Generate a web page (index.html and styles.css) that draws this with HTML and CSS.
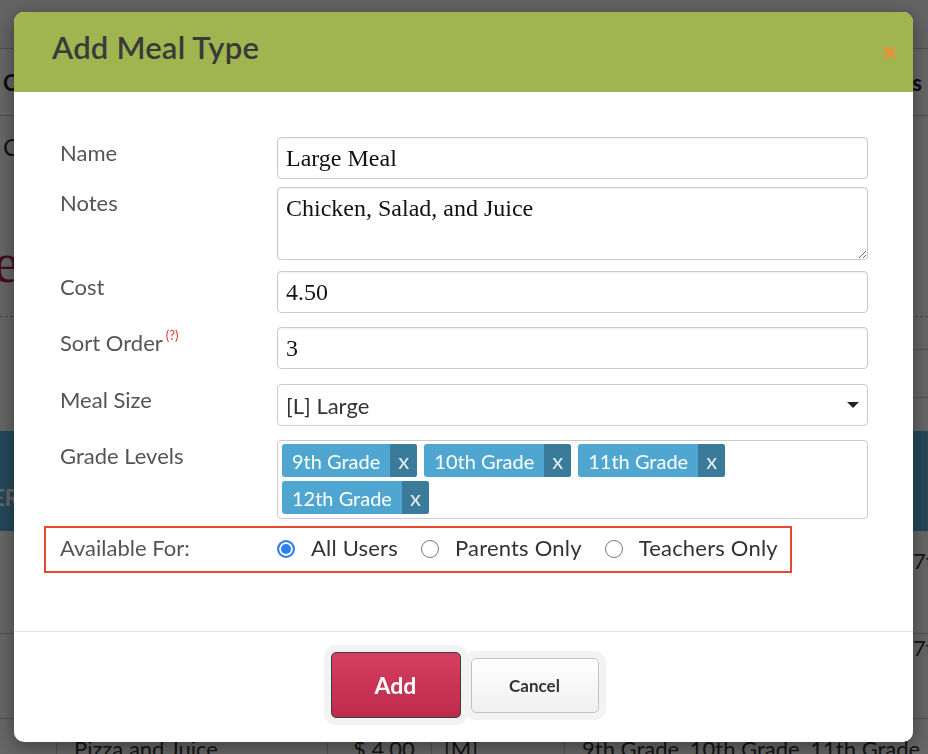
FILE: index.html
```html
<!DOCTYPE html>
<html lang="en">
<head>
    <meta charset="UTF-8">
    <meta name="viewport" content="width=device-width, initial-scale=1.0">
    <title>Meal Types</title>
    <link rel="stylesheet" href="styles.css">
</head>
<body>
<div class="page">
    <div class="topbar"></div>
    <div class="tabs">
        <span>Cafe</span>
        <span>Meal Types</span>
    </div>
    <div class="crumbs">Co</div>
    <div class="brand"><span>Large</span></div>
    <div class="subrows">
        <div class="subrow"></div>
        <div class="subrow"></div>
    </div>
    <div class="band"><span>ER</span></div>
    <div class="trow tall"><span class="tcell-last">7th Grade</span></div>
    <div class="trow"><span class="tcell-last">7th Grade</span></div>
    <div class="trow last">
        <span class="tc c1"></span>
        <span class="tc c2">Pizza and Juice</span>
        <span class="tc c3">$ 4.00</span>
        <span class="tc c4">[M]</span>
        <span class="tc c5">9th Grade, 10th Grade, 11th Grade,</span>
    </div>
</div>

<div class="backdrop">
    <div class="modal">
        <div class="modal-head">
            <h2>Add Meal Type</h2>
            <button class="close" type="button" aria-label="Close">
                <svg width="13" height="13" viewBox="0 0 13 13">
                    <path d="M2 2 L11 11 M11 2 L2 11" stroke="#e8913a" stroke-width="3.4" stroke-linecap="round"/>
                </svg>
            </button>
        </div>

        <form class="modal-body">
            <div class="row gap-8">
                <label>Name</label>
                <input class="field" type="text" value="Large Meal">
            </div>
            <div class="row gap-11">
                <label>Notes</label>
                <textarea class="field notes">Chicken, Salad, and Juice</textarea>
            </div>
            <div class="row">
                <label>Cost</label>
                <input class="field" type="text" value="4.50">
            </div>
            <div class="row gap-15">
                <label>Sort Order<sup class="help">(?)</sup></label>
                <input class="field" type="text" value="3">
            </div>
            <div class="row">
                <label>Meal Size</label>
                <div class="select-wrap">
                    <select class="field select">
                        <option>[L] Large</option>
                        <option>[M] Medium</option>
                        <option>[S] Small</option>
                    </select>
                </div>
            </div>
            <div class="row gap-7">
                <label>Grade Levels</label>
                <div class="field tags">
                    <span class="tag">9th Grade<span class="tag-x">x</span></span>
                    <span class="tag">10th Grade<span class="tag-x">x</span></span>
                    <span class="tag">11th Grade<span class="tag-x">x</span></span>
                    <span class="tag">12th Grade<span class="tag-x">x</span></span>
                </div>
            </div>
            <div class="avail">
                <span class="avail-label">Available For:</span>
                <label class="radio"><input type="radio" name="for" checked>All Users</label>
                <label class="radio"><input type="radio" name="for">Parents Only</label>
                <label class="radio"><input type="radio" name="for">Teachers Only</label>
            </div>
        </form>

        <div class="modal-foot">
            <button class="btn btn-add" type="button">Add</button>
            <button class="btn btn-cancel" type="button">Cancel</button>
        </div>
    </div>
</div>
</body>
</html>
```

FILE: styles.css
```css
body {
    margin: 0;
    font-family: 'Lato', 'Open Sans', sans-serif;
    background: #fff;
    color: #333;
    height: 754px;
    overflow: hidden;
}

/* page behind the dialog */
.page {
    width: 928px;
    overflow: hidden;
}
.page .topbar {
    height: 48px;
    background: #f6f6f6;
    border-bottom: 1px solid #c4c4c4;
}
.page .tabs {
    height: 66px;
    border-bottom: 1px solid #c4c4c4;
    display: flex;
    justify-content: space-between;
    align-items: center;
    padding: 0 6px 0 3px;
    font-size: 22px;
    font-weight: 700;
    color: #222;
}
.page .crumbs {
    height: 60px;
    padding: 16px 0 0 3px;
    box-sizing: border-box;
    font-size: 24px;
    color: #333;
}
.page .brand {
    height: 141px;
    border-bottom: 1px dashed #aaa;
    box-sizing: border-box;
    padding-top: 58px;
    font-family: 'Liberation Serif', serif;
    font-size: 58px;
    color: #b0204a;
    line-height: 1;
    white-space: nowrap;
}
.page .brand span {
    margin-left: -115px;
}
.page .subrows {
    padding-left: 600px;
}
.page .subrow {
    height: 47px;
    border-bottom: 1px solid #ccc;
}
.page .subrow:first-child {
    height: 32px;
}
.page .band {
    margin-top: 33px;
    height: 100px;
    background: #5ab5e0;
    color: #fff;
    font-weight: 700;
    font-size: 22px;
    padding-top: 53px;
    box-sizing: border-box;
}
.page .band span {
    margin-left: -8px;
}
.page .trow {
    height: 85px;
    border-bottom: 1px solid #ccc;
    box-sizing: border-box;
    font-size: 22px;
    display: flex;
}
.page .trow.tall {
    height: 103px;
    padding-top: 16px;
}
.page .trow .tcell-last {
    margin-left: 913px;
    white-space: nowrap;
}
.page .trow.last {
    border-bottom: none;
    padding-top: 10px;
}
.page .tc {
    display: block;
    border-right: 1px solid #ccc;
    white-space: nowrap;
    padding: 6px 0 0 17px;
    box-sizing: border-box;
    height: 60px;
}
.page .c1 { width: 57px; padding: 0; }
.page .c2 { width: 271px; }
.page .c3 { width: 104px; padding-left: 25px; }
.page .c4 { width: 133px; padding-left: 12px; }
.page .c5 { border-right: none; }

.backdrop {
    position: fixed;
    inset: 0;
    background: rgba(0, 0, 0, 0.6);
}

/* dialog */
.modal {
    position: absolute;
    top: 12px;
    left: 14px;
    width: 899px;
    height: 730px;
    background: #fff;
    border-radius: 10px;
    box-shadow: 0 5px 20px rgba(0, 0, 0, 0.4);
    overflow: hidden;
    display: flex;
    flex-direction: column;
}
.modal-head {
    height: 80px;
    background: #a0b54f;
    display: flex;
    justify-content: space-between;
    align-items: flex-start;
    padding: 0 17px 0 38px;
    box-sizing: border-box;
    flex-shrink: 0;
}
.modal-head h2 {
    margin: 17px 0 0;
    font-size: 31px;
    line-height: 36px;
    font-weight: 600;
    letter-spacing: 0.2px;
    color: #3a3a3a;
}
.modal-head .close {
    align-self: center;
    background: none;
    border: none;
    padding: 0;
    width: 13px;
    height: 13px;
    cursor: pointer;
    display: flex;
}

.modal-body {
    padding: 45px 45px 58px 46px;
    border-bottom: 1px solid #e4e4e4;
}
.row {
    display: flex;
    margin-bottom: 14px;
}
.row.gap-7 { margin-bottom: 7px; }
.row.gap-8 { margin-bottom: 8px; }
.row.gap-11 { margin-bottom: 11px; }
.row.gap-15 { margin-bottom: 15px; }
.row > label {
    width: 217px;
    flex-shrink: 0;
    padding-top: 4px;
    font-size: 22px;
    line-height: 24px;
    color: #555;
}
.row .help {
    color: #e8332a;
    font-size: 13px;
    margin-left: 3px;
    vertical-align: 11px;
    line-height: 0;
}

.field {
    flex: 1;
    min-width: 0;
    height: 42px;
    box-sizing: border-box;
    border: 1px solid #cacaca;
    border-radius: 4px;
    padding: 0 8px;
    font-family: 'Liberation Serif', serif;
    font-size: 24px;
    color: #111;
    background: #fff;
    box-shadow: inset 0 1px 2px rgba(0, 0, 0, 0.07);
    outline: none;
}
.field.notes {
    height: 73px;
    padding-top: 7px;
    resize: vertical;
    display: block;
}
.select-wrap {
    flex: 1;
    display: flex;
    position: relative;
}
.select-wrap::after {
    content: '';
    position: absolute;
    right: 9px;
    top: 18px;
    border-left: 6px solid transparent;
    border-right: 6px solid transparent;
    border-top: 6px solid #222;
    pointer-events: none;
}
.field.select {
    appearance: none;
    -webkit-appearance: none;
    font-family: 'Lato', 'Open Sans', sans-serif;
    font-size: 22px;
    color: #333;
    box-shadow: none;
}
.field.tags {
    height: 79px;
    padding: 3px 4px;
    display: flex;
    flex-wrap: wrap;
    align-content: flex-start;
    gap: 4px 7px;
    font-family: 'Lato', 'Open Sans', sans-serif;
    box-shadow: none;
}
.tag {
    display: inline-flex;
    align-items: center;
    height: 33px;
    background: #4fa7d1;
    color: #fff;
    font-size: 20px;
    padding-left: 10px;
    border-radius: 3px;
    overflow: hidden;
}
.tag .tag-x {
    display: flex;
    align-items: center;
    justify-content: center;
    align-self: stretch;
    width: 27px;
    margin-left: 10px;
    background: #3a7b9a;
    font-size: 22px;
    color: #e6eef3;
}

.avail {
    display: flex;
    align-items: center;
    width: 748px;
    height: 47px;
    box-sizing: border-box;
    margin-left: -16px;
    padding: 0 0 4px 14px;
    border: 2px solid #e8482d;
    white-space: nowrap;
}
.avail-label {
    width: 217px;
    flex-shrink: 0;
    font-size: 22px;
    color: #555;
}
.radio {
    display: flex;
    align-items: center;
    flex-shrink: 0;
    font-size: 22px;
    letter-spacing: 0.2px;
    color: #333;
    margin-right: 23px;
}
.radio input {
    appearance: none;
    -webkit-appearance: none;
    flex-shrink: 0;
    width: 18px;
    height: 18px;
    margin: 3px 16px 0 0;
    border: 1px solid #777;
    border-radius: 50%;
    background: #fff;
}
.radio input:checked {
    border: 2px solid #2f7ef2;
    background: #2f7ef2;
    box-shadow: inset 0 0 0 2px #fff;
}

.modal-foot {
    flex: 1;
    display: flex;
    justify-content: center;
    align-items: center;
    gap: 10px;
    padding: 0 0 4px 2px;
}
.btn {
    font-family: 'Lato', 'Open Sans', sans-serif;
    font-weight: 700;
    border-radius: 5px;
    cursor: pointer;
    box-shadow: 0 0 0 7px #f3f3f3;
}
.btn-add {
    width: 130px;
    height: 66px;
    font-size: 23px;
    color: #fff;
    border: 1px solid #3d3d3d;
    background: linear-gradient(to bottom, #d63f62, #bd2b4c);
}
.btn-cancel {
    width: 128px;
    height: 55px;
    font-size: 17px;
    color: #333;
    border: 1px solid #c2c2c2;
    background: linear-gradient(to bottom, #fff, #f0f0f0);
}
```
